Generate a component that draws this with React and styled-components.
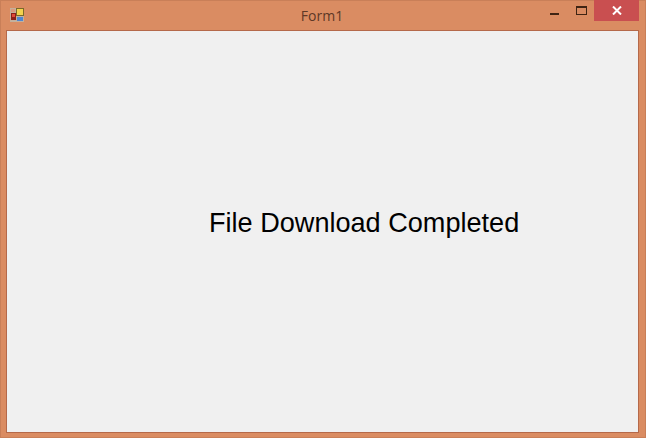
import React from "react";
import styled, { createGlobalStyle } from "styled-components";

const GlobalStyle = createGlobalStyle`
  html, body {
    margin: 0;
    padding: 0;
    background: #da8c62;
  }
`;

const Window = styled.div`
  width: 646px;
  height: 438px;
  display: flex;
  flex-direction: column;
  box-sizing: border-box;
  padding: 0 7px 5px 6px;
  background: #da8c62;
  box-shadow: inset 0 0 0 1px #c97f58;
  overflow: hidden;
`;

const TitleBar = styled.div`
  height: 30px;
  flex-shrink: 0;
  display: grid;
  grid-template-columns: 1fr auto 1fr;
  align-items: start;
`;

const AppIcon = styled.svg`
  display: block;
  width: 14px;
  height: 14px;
  margin: 8px 0 0 4px;
`;

const Title = styled.div`
  margin-top: 7px;
  margin-left: -1px;
  font-family: "Open Sans", "Noto Sans", sans-serif;
  font-size: 14px;
  line-height: 18px;
  color: #5e3826;
`;

const Controls = styled.div`
  display: flex;
  justify-content: flex-end;
  align-items: flex-start;
`;

const ControlButton = styled.div`
  width: ${(props) => props.$width}px;
  height: 21px;
  display: flex;
  align-items: center;
  justify-content: center;
  background: ${(props) => (props.$close ? "#c94f50" : "transparent")};
`;

const Client = styled.div`
  flex: 1;
  box-sizing: border-box;
  padding: 176px 0 0 202px;
  background: #f0f0f0;
  border: 1px solid #b5694a;
`;

const Message = styled.div`
  font-family: "Liberation Sans", Arial, sans-serif;
  font-size: 27.1px;
  line-height: 31px;
  color: #000;
  white-space: nowrap;
`;

const App = () => {
  return (
    <>
      <GlobalStyle />
      <Window>
        <TitleBar>
          <AppIcon viewBox="0 0 14 14">
            <rect x="0" y="0" width="14" height="14" fill="#c4b09c" />
            <rect x="1" y="5" width="5" height="7" fill="#8c1f1a" />
            <rect x="2" y="6" width="3" height="3" fill="#e04a3a" />
            <rect x="6" y="0" width="8" height="8" fill="#7a6a2a" />
            <rect x="7" y="1" width="6" height="6" fill="#f3d24e" />
            <rect x="7" y="9" width="6" height="4" fill="#4f86d0" />
            <rect x="1" y="1" width="4" height="3" fill="#d99a80" />
          </AppIcon>
          <Title>Form1</Title>
          <Controls>
            <ControlButton $width={28}>
              <svg width="9" height="9" viewBox="0 0 9 9">
                <rect x="0" y="7" width="9" height="2" fill="#3f2413" />
              </svg>
            </ControlButton>
            <ControlButton $width={26}>
              <svg width="11" height="9" viewBox="0 0 11 9">
                <rect x="0.5" y="0.5" width="10" height="8" fill="none" stroke="#3f2413" />
                <rect x="0" y="0" width="11" height="2" fill="#3f2413" />
              </svg>
            </ControlButton>
            <ControlButton $width={45} $close>
              <svg width="10" height="9" viewBox="0 0 10 9">
                <path d="M1 0.5 L9 8.5 M9 0.5 L1 8.5" stroke="#fff" strokeWidth="2" fill="none" />
              </svg>
            </ControlButton>
          </Controls>
        </TitleBar>
        <Client>
          <Message>File Download Completed</Message>
        </Client>
      </Window>
    </>
  );
};

export default App;
